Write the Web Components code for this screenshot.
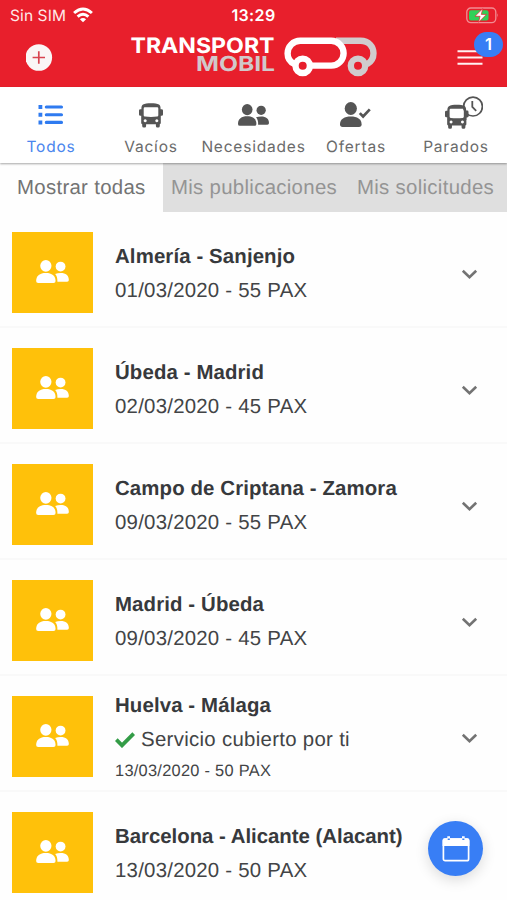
<!DOCTYPE html>
<html lang="es">
<head>
<meta charset="utf-8">
<title>Transport Mobil</title>
<style>
html,body{margin:0;height:900px;overflow:hidden;background:#fefefe;text-rendering:geometricPrecision}
</style>
</head>
<body>
<transport-app></transport-app>
<script>
const define = (name, render) => customElements.define(name, class extends HTMLElement {
  constructor() {
    super();
    this.attachShadow({mode: 'open'});
  }
  connectedCallback() { this.shadowRoot.innerHTML = render(this); }
});

const busShape = `<path fill-rule="evenodd" d="M4 1.6C7 -.2 17 -.2 20 1.6C21.3 2.3 21.6 4 21.6 6.2H22.6Q24 6.2 24 7.6V11.6Q24 12.8 22.6 12.8H21.8V20Q21.8 21 20.8 21.2V23Q20.8 24.6 19.2 24.6H18.4Q16.9 24.6 16.9 23V21.3H7.1V23Q7.1 24.6 5.6 24.6H4.8Q3.2 24.6 3.2 23V21.2Q2.2 21 2.2 20V12.8H1.4Q0 12.8 0 11.6V7.6Q0 6.2 1.4 6.2H2.4C2.4 4 2.7 2.3 4 1.6ZM5.8 4.2Q4.7 4.2 4.7 5.4V12.2Q4.7 13.5 5.9 13.6Q12 14.5 18.1 13.6Q19.3 13.5 19.3 12.2V5.4Q19.3 4.2 18.2 4.2ZM6.2 16.2a1.5 1.5 0 1 0 .01 0ZM17.8 16.2a1.5 1.5 0 1 0 .01 0Z"/>`;
const peopleShape = `<ellipse cx="9.5" cy="5.7" rx="5.5" ry="5.7"/><path d="M0 20.5C0 15.2 3.6 12.6 9.5 12.6S19 15.2 19 20.5Q19 22.4 17 22.4H2Q0 22.4 0 20.5Z"/><circle cx="23.9" cy="6.4" r="4.8"/><path d="M18.6 13.7Q21 12.7 24 12.7C29 12.7 32 15 32 19.6Q32 21.2 30.3 21.2H20.8C20.9 18 20.3 15.6 18.6 13.7Z"/>`;
const icons = {
  list: `<svg width="26" height="22" viewBox="0 0 26 22"><g fill="#2f7bf0"><path d="M.5 1h3.8v4H.5zM.5 8.7h3.8v4H.5zM.5 16.4h3.8v4H.5z"/><path stroke="#2f7bf0" stroke-width="3.1" stroke-linecap="round" d="M8.3 3h15.2M8.3 10.7h15.2M8.3 18.4h15.2"/></g></svg>`,
  bus: `<svg width="24" height="25" viewBox="0 0 24 25">${busShape}</svg>`,
  people: `<svg width="31" height="22" viewBox="0 0 32 22.5">${peopleShape}</svg>`,
  offer: `<svg width="32" height="26" viewBox="0 0 32 26"><ellipse cx="11.8" cy="6.5" rx="6.1" ry="6.4"/><path d="M1 22.3C1 17 5.5 14.5 11.8 14.5S22.6 17 22.6 22.3Q22.6 25 20 25H3.6Q1 25 1 22.3Z"/><path d="M20.8 11.1L24.1 14.5L30.8 7.4" fill="none" stroke="currentColor" stroke-width="2.7"/></svg>`,
  parked: `<svg width="42" height="34" viewBox="0 0 42 34"><g transform="translate(4 8.6) scale(.98)">${busShape}</g><circle cx="32" cy="10.6" r="9.4" fill="#fff" stroke="currentColor" stroke-width="1.7"/><path d="M31.3 5v5.9l3.9 4" fill="none" stroke="currentColor" stroke-width="1.8"/><path d="M22.6 9.2Q25.1 10 25.2 14.6H26.3Q27.5 14.6 27.5 16V20Q27.5 21.4 25.4 21.4V24H22.9V14Z" fill="currentColor"/></svg>`
};

define('status-bar', () => `<style>
:host{display:grid;grid-template-columns:1fr auto 1fr;align-items:center;height:29px;padding:0 8px 0 10px;color:#fff;font:16px/29px Inter,sans-serif}
.net,.bat{display:flex;align-items:center}.net{gap:7px;color:#ffe9e9}.net span{font-size:15.5px;letter-spacing:.1px}.bat{justify-content:flex-end}b{font-weight:600;letter-spacing:.4px;padding:1px 2px 0 0}
</style><div class="net"><span>Sin SIM</span>
<svg width="20" height="16" viewBox="0 0 20 16" fill="none" stroke="#fff" stroke-width="3"><path d="M1.1 6Q10-2 18.9 6M4.6 9.6Q10 4.9 15.4 9.6"/><path d="M10 15.2L6.9 12.2Q10 9.7 13.1 12.2Z" fill="#fff" stroke="none"/></svg></div>
<b>13:29</b><div class="bat"><svg width="33" height="17" viewBox="0 0 33 17"><rect x=".8" y="1" width="29" height="14.6" rx="4" fill="none" stroke="#f28c92" stroke-width="1.3"/><rect x="3" y="3.2" width="19.5" height="10.2" rx="2" fill="#30d158"/><path d="M31.3 6.2q1.7 2.1 0 4.2z" fill="#f28c92"/><path d="M16.8 1.6L9 9.3h5.1L12.5 15.2L20.5 7.4h-5.2z" fill="#fff" stroke="#e81f2c" stroke-width=".7"/></svg></div>`);

define('brand-logo', () => `<style>:host{display:block;width:252px;height:46px}svg{display:block}text{font-family:Inter,sans-serif;font-weight:700}</style>
<svg width="252" height="46" viewBox="129 34 252 46">
<text x="130.5" y="53.2" font-size="21.2" textLength="144" lengthAdjust="spacingAndGlyphs" fill="#fff">TRANSPORT</text>
<text x="196" y="70.8" font-size="20.6" textLength="79" lengthAdjust="spacingAndGlyphs" fill="#d1c8ca">MOBIL</text>
<g fill="none" stroke-width="6.4"><g stroke="#d0cccd"><path d="M336 40.8h24.5c8.5 0 13 6 13 12.5 0 5-2 8.5-6.5 11"/><circle cx="358" cy="65.8" r="7.2"/></g>
<g stroke="#fff"><path d="M312 65.6h19.2a12.4 12.4 0 0 0 0-24.8h-31a12.6 12.6 0 0 0-12.6 12.6c0 5 2 8.2 6.8 10.6"/><circle cx="302.7" cy="65.8" r="7.2"/></g></g></svg>`);

define('app-header', () => `<style>
:host{display:block;height:87px;background:#e81f2c}
.bar{display:grid;grid-template-columns:103px 252px 1fr;height:58px;padding:5px 24px 0 26px;box-sizing:border-box;align-items:start}
.add{margin-top:10px}.add svg{display:block}
.menu{position:relative;justify-self:end;width:26px;height:18px;margin-top:14px}.menu svg{display:block}
.badge{position:absolute;left:17px;top:-16px;width:29px;height:25px;border-radius:13px;background:#387ef5;color:#fff;font:600 16.5px/25px Inter,sans-serif;text-align:center}
</style><status-bar></status-bar><div class="bar"><div class="add"><svg width="27" height="27" viewBox="0 0 27 27"><circle cx="12.8" cy="13.5" r="13.3" fill="#faf6f6"/><path d="M6.6 13.5h12.4M12.8 7.3v12.4" stroke="#d84450" stroke-width="1.7"/></svg></div>
<brand-logo></brand-logo>
<div class="menu"><svg width="26" height="18" viewBox="0 0 26 18"><path d="M.5 3.2h25M.5 9.4h25M.5 15.7h25" stroke="#fff1f1" stroke-width="2"/></svg><span class="badge">1</span></div></div>`);

define('nav-item', el => `<style>
:host{display:flex;flex-direction:column;align-items:center;justify-content:flex-end;color:#555;font:15.5px/20px Inter,sans-serif}
:host([active]) span{color:#4a86ee}
.icon{display:flex;align-items:center;justify-content:center;height:34px;fill:currentColor}
:host([icon=parked]) .icon{height:37px;align-items:flex-start;padding-left:11px}
:host([icon=offer]) .icon{padding-right:2px}
span{color:#6b6b6b;white-space:nowrap;margin-top:5px;letter-spacing:.8px}
:host([icon=parked]) span{margin-top:4px}
svg{display:block}
</style><div class="icon">${icons[el.getAttribute('icon')]}</div><span><slot></slot></span>`);

define('nav-bar', () => `<style>
:host{display:grid;grid-template-columns:102px 98px 107px 98px 102px;height:76px;background:#fff;box-sizing:border-box;padding-bottom:6px;position:relative;box-shadow:0 1px 2px rgba(0,0,0,.35)}
</style><nav-item icon="list" active>Todos</nav-item><nav-item icon="bus">Vacíos</nav-item><nav-item icon="people">Necesidades</nav-item><nav-item icon="offer">Ofertas</nav-item><nav-item icon="parked">Parados</nav-item>`);

define('filter-tabs', () => `<style>
:host{display:grid;grid-template-columns:163px 182px 162px;height:49px;font:20.4px/51px "Liberation Sans",Arial,sans-serif;letter-spacing:.3px;color:#949494;background:#dfdfdf}
div{white-space:nowrap;padding-left:8px}.on{background:#fefefe;color:#737373;padding-left:17px}.last{padding-left:12px}
</style><div class="on">Mostrar todas</div><div>Mis publicaciones</div><div class="last">Mis solicitudes</div>`);

define('trip-row', el => `<style>
:host{display:flex;align-items:center;height:116px;box-sizing:border-box;padding:0 29px 0 12px;font-family:"Liberation Sans",Arial,sans-serif;color:#424446;border-bottom:2px solid #f9f9f9}
.tile{width:81px;height:81px;background:#ffc10a;display:flex;align-items:center;justify-content:center;margin-top:7px}
.tile svg{fill:#fff;margin-bottom:3px}
.text{flex:1;padding:11px 0 0 22px;white-space:nowrap}
.title{font:bold 20.4px/33.5px "Liberation Sans",Arial,sans-serif;letter-spacing:.12px;color:#37393c}
:host([last]) .title{letter-spacing:-.02px}
.sub{font-size:20.4px;line-height:33.5px;letter-spacing:.24px}
.covered{display:flex;align-items:center;gap:6px;font-size:20.4px;line-height:33.5px;letter-spacing:.3px}
:host([covered]) .text{padding-top:9px}:host([covered]) .sub{font-size:16.4px;line-height:28px;letter-spacing:.27px}
.chev{display:block;margin-top:10px}
</style><div class="tile"><svg width="33" height="23" viewBox="0 0 32 22.5">${peopleShape}</svg></div>
<div class="text"><div class="title"><slot></slot></div>${el.hasAttribute('covered') ? `<div class="covered"><svg width="20" height="16" viewBox="0 0 20 16"><path d="M1.3 7.7L7 13.4L18.7 1.7" fill="none" stroke="#339c47" stroke-width="3.8"/></svg><span>Servicio cubierto por ti</span></div>` : ''}<div class="sub"><slot name="sub"></slot></div></div>
${el.hasAttribute('last') ? '' : `<svg class="chev" width="17" height="11" viewBox="0 0 17 11"><path d="M1.8 1.8L8.5 8.2L15.2 1.8" fill="none" stroke="#737373" stroke-width="2.6"/></svg>`}`);

define('calendar-button', () => `<style>
:host{position:absolute;left:428px;top:821px;width:55px;height:55px;border-radius:50%;background:#387ef5;box-shadow:0 4px 14px rgba(0,0,0,.14);display:flex;align-items:center;justify-content:center}
</style><svg width="28" height="26" viewBox="0 0 28 26"><rect x="1.4" y="3.2" width="25.2" height="21.5" rx="1.8" fill="none" stroke="#fff" stroke-width="1.7"/><path d="M.6 10V4.2Q.6 2.3 2.5 2.3H5.3V.2H8V2.3H20V.2h2.7v2.1h2.8q1.9 0 1.9 1.9V10z" fill="#fff"/><path d="M5.7 2.5h2.1v1.6H5.7zM20.3 2.5h2.1v1.6h-2.1z" fill="#387ef5"/></svg>`);

define('transport-app', () => `<style>
:host{display:block;position:relative;width:507px;height:900px;overflow:hidden;background:#fefefe}
</style><app-header></app-header><nav-bar></nav-bar><filter-tabs></filter-tabs>
<trip-row>Almería - Sanjenjo<span slot="sub">01/03/2020 - 55 PAX</span></trip-row>
<trip-row>Úbeda - Madrid<span slot="sub">02/03/2020 - 45 PAX</span></trip-row>
<trip-row>Campo de Criptana - Zamora<span slot="sub">09/03/2020 - 55 PAX</span></trip-row>
<trip-row>Madrid - Úbeda<span slot="sub">09/03/2020 - 45 PAX</span></trip-row>
<trip-row covered>Huelva - Málaga<span slot="sub">13/03/2020 - 50 PAX</span></trip-row>
<trip-row last>Barcelona - Alicante (Alacant)<span slot="sub">13/03/2020 - 50 PAX</span></trip-row>
<calendar-button></calendar-button>`);
</script>
</body>
</html>
